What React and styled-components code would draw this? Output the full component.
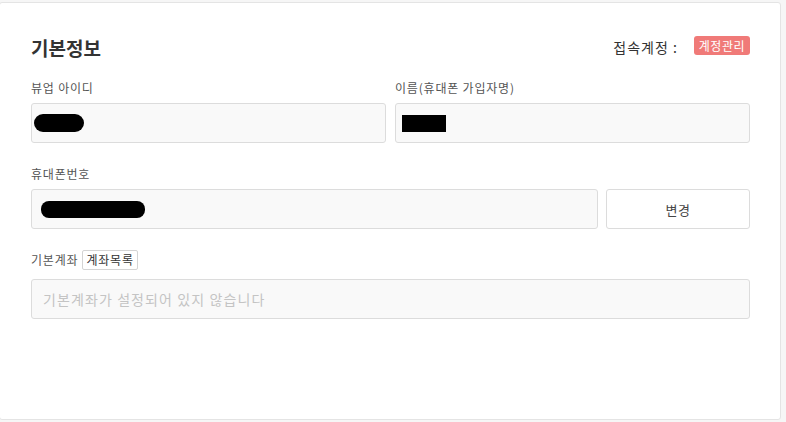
import React from "react";
import styled, { createGlobalStyle } from "styled-components";

const GlobalStyle = createGlobalStyle`
  html, body {
    margin: 0;
    padding: 0;
    background: #f6f6f6;
  }
  body {
    font-family: "Noto Sans CJK KR", "Noto Sans", sans-serif;
    color: #333;
  }
`;

const Card = styled.div`
  box-sizing: border-box;
  margin: 2px 5px 0 -1px;
  height: 418px;
  background: #fff;
  border: 1px solid #e4e4e4;
  border-radius: 3px;
  padding: 30px 30px 0 31px;
`;

const Header = styled.div`
  display: flex;
  align-items: center;
  justify-content: space-between;
  height: 28px;
  margin-bottom: 16px;
`;

const Title = styled.h2`
  margin: 0;
  font-size: 19px;
  font-weight: 700;
  color: #333;
`;

const Account = styled.div`
  display: flex;
  align-items: center;
  gap: 16px;
  font-size: 14px;
  letter-spacing: 1px;
  color: #333;
`;

const Badge = styled.span`
  display: inline-block;
  background: #f07a78;
  color: #fff;
  font-size: 12px;
  letter-spacing: 0.5px;
  line-height: 19px;
  padding: 0 5px;
  border-radius: 3px;
  margin-top: -3px;
`;

const Row = styled.div`
  display: flex;
  gap: ${(p) => p.$gap || 9}px;
  margin-bottom: 20px;
`;

const Field = styled.div`
  flex: ${(p) => p.$flex || 1};
  min-width: 0;
`;

const Label = styled.div`
  display: flex;
  align-items: center;
  gap: 4px;
  height: ${(p) => p.$h || 20}px;
  margin-bottom: ${(p) => p.$mb || 6}px;
  font-size: 12px;
  letter-spacing: 0.8px;
  color: #555;
`;

const Tag = styled.span`
  display: inline-block;
  border: 1px solid #d4d4d4;
  border-radius: 2px;
  padding: 0 3px;
  font-size: 12px;
  line-height: 18px;
  color: #333;
`;

const Input = styled.div`
  box-sizing: border-box;
  display: flex;
  align-items: center;
  height: 40px;
  padding: 0 ${(p) => p.$pad || 3}px;
  background: #f9f9f9;
  border: 1px solid #dcdcdc;
  border-radius: 3px;
  font-size: 14px;
  letter-spacing: 1.1px;
  color: #c4c4c4;
`;

const Redact = styled.span`
  display: inline-block;
  width: ${(p) => p.$w}px;
  height: ${(p) => p.$h}px;
  background: #000;
  border-radius: ${(p) => p.$r || 0}px;
`;

const Button = styled.button`
  box-sizing: border-box;
  width: 144px;
  height: 40px;
  background: #fff;
  border: 1px solid #dcdcdc;
  border-radius: 3px;
  font-family: inherit;
  font-size: 13px;
  letter-spacing: 0.5px;
  color: #444;
  cursor: pointer;
`;

export default function App() {
  return (
    <>
      <GlobalStyle />
      <Card>
        <Header>
          <Title>기본정보</Title>
          <Account>
            <span>접속계정 :</span>
            <Badge>계정관리</Badge>
          </Account>
        </Header>

        <Row>
          <Field>
            <Label>뷰업 아이디</Label>
            <Input $pad={2}>
              <Redact $w={50} $h={18} $r={9} />
            </Input>
          </Field>
          <Field>
            <Label>이름(휴대폰 가입자명)</Label>
            <Input $pad={6}>
              <Redact $w={44} $h={17} />
            </Input>
          </Field>
        </Row>

        <Row $gap={8}>
          <Field>
            <Label>휴대폰번호</Label>
            <Input $pad={9}>
              <Redact $w={104} $h={17} $r={8} />
            </Input>
          </Field>
          <Field $flex="0 0 144px">
            <Label>&nbsp;</Label>
            <Button>변경</Button>
          </Field>
        </Row>

        <Row>
          <Field>
            <Label $h={21} $mb={9}>
              기본계좌 <Tag>계좌목록</Tag>
            </Label>
            <Input $pad={11}>기본계좌가 설정되어 있지 않습니다</Input>
          </Field>
        </Row>
      </Card>
    </>
  );
}
